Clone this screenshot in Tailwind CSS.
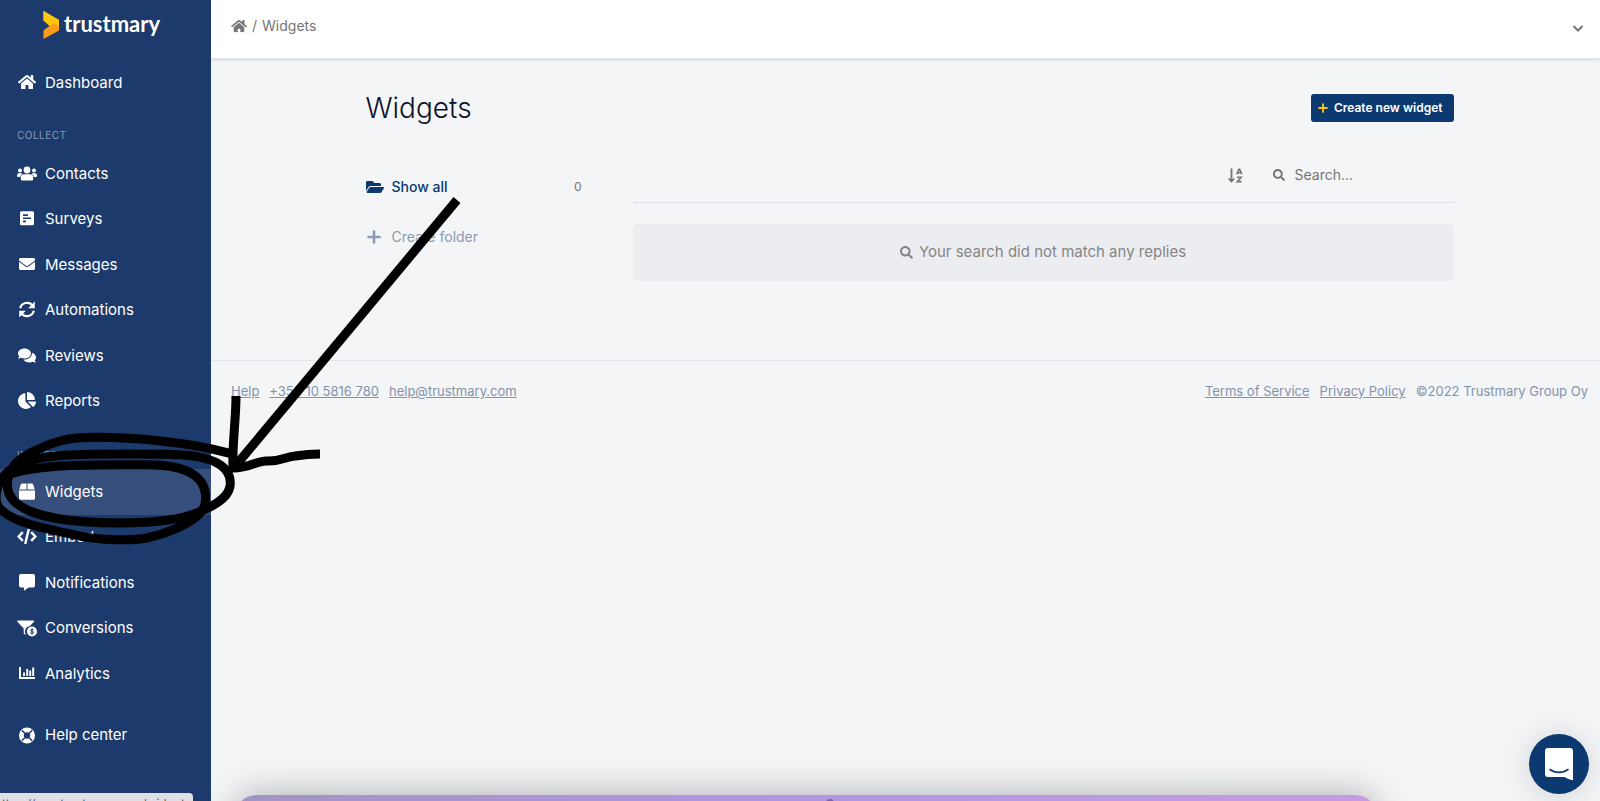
<!DOCTYPE html>
<html lang="en">
<head>
  <meta charset="UTF-8">
  <meta name="viewport" content="width=device-width, initial-scale=1.0">
  <title>Widgets - Trustmary</title>
  <script src="https://cdn.jsdelivr.net/npm/@tailwindcss/browser@4"></script>
</head>
<body class="relative flex min-h-screen overflow-hidden bg-[#f4f5f7] font-['Inter',sans-serif]">

  <!-- Shared icons -->
  <svg class="hidden">
    <symbol id="home" viewBox="0 0 576 512"><path d="M280.37 148.26L96 300.11V464a16 16 0 0 0 16 16l112.06-.29a16 16 0 0 0 15.92-16V368a16 16 0 0 1 16-16h64a16 16 0 0 1 16 16v95.64a16 16 0 0 0 16 16.05L464 480a16 16 0 0 0 16-16V300L295.67 148.26a12.19 12.19 0 0 0-15.3 0zM571.6 251.47L488 182.56V44.05a12 12 0 0 0-12-12h-56a12 12 0 0 0-12 12v72.61L318.47 43a48 48 0 0 0-61 0L4.34 251.47a12 12 0 0 0-1.6 16.9l25.5 31A12 12 0 0 0 45.15 301l235.22-193.74a12.19 12.19 0 0 1 15.3 0L530.9 301a12 12 0 0 0 16.9-1.6l25.5-31a12 12 0 0 0-1.7-16.93z"/></symbol>
    <symbol id="search" viewBox="0 0 512 512"><path d="M505 442.7L405.3 343c-4.5-4.5-10.6-7-17-7H372c27.6-35.3 44-79.7 44-128C416 93.1 322.9 0 208 0S0 93.1 0 208s93.1 208 208 208c48.3 0 92.7-16.4 128-44v16.3c0 6.4 2.5 12.5 7 17l99.7 99.7c9.4 9.4 24.6 9.4 33.9 0l28.3-28.3c9.4-9.4 9.4-24.6.1-34zM208 336c-70.7 0-128-57.2-128-128 0-70.7 57.2-128 128-128 70.7 0 128 57.2 128 128 0 70.7-57.2 128-128 128z"/></symbol>
    <symbol id="plus" viewBox="0 0 14 14"><path d="M7 1.5v11M1.5 7h11" fill="none" stroke="currentColor" stroke-width="2.6" stroke-linecap="round"/></symbol>
  </svg>

  <!-- Sidebar -->
  <aside class="flex w-[211px] shrink-0 flex-col bg-[#1c3a6b] text-[15px] text-white">
    <a href="#" class="flex h-[60px] items-start gap-[5px] pt-[11px] pl-[43px]">
      <svg class="h-7 w-4" viewBox="0 0 16 28">
        <path d="M.5 0 16 9v10.500L6 14.500.500 9.500z" fill="#ffc50d"/>
        <path d="M16 9v10.500L.500 28v-8.500L7 14.500z" fill="#f99d1c"/>
        <path d="M.5 0 16 9v7l-4-3.500-5 2-6.500-5z" fill="#ffc50d"/>
      </svg>
      <span class="font-['Lato',sans-serif] text-[22px] leading-[26px] font-bold">trustmary</span>
    </a>

    <nav>
      <a href="#" class="flex h-[46px] items-center gap-2 pl-[17px]">
        <svg class="h-[18px] w-5" viewBox="0 0 20 18" fill="currentColor"><use href="#home" x="1" y="0" width="18" height="16"/></svg>
        Dashboard
      </a>

      <h2 class="flex h-[45px] items-end pb-[9px] pl-[17px] text-[10px] leading-[14px] tracking-wider text-[#8b9bb8]">COLLECT</h2>
      <div class="grid h-[273px] auto-rows-fr">
        <a href="#" class="flex items-center gap-2 pl-[17px]">
          <svg class="h-[18px] w-5" viewBox="0 0 20 18" fill="currentColor">
            <circle cx="10" cy="5" r="3.400"/><circle cx="3" cy="5.500" r="2"/><circle cx="17" cy="5.500" r="2"/>
            <path d="M7.300 9.200h5.400a3.500 3.500 0 0 1 3.500 3.500v1.500a1.300 1.300 0 0 1-1.300 1.300H5.100a1.300 1.300 0 0 1-1.300-1.300v-1.500a3.500 3.500 0 0 1 3.500-3.500zM2 8.300h2c.6 0 1.100.2 1.500.6A4.500 4.500 0 0 0 3.200 12H1a1 1 0 0 1-1-1v-.7a2 2 0 0 1 2-2zM18 8.300h-2c-.6 0-1.100.2-1.500.6a4.500 4.500 0 0 1 2.300 3.100H19a1 1 0 0 0 1-1v-.7a2 2 0 0 0-2-2z"/>
          </svg>
          Contacts
        </a>
        <a href="#" class="flex items-center gap-2 pl-[17px]">
          <svg class="h-[18px] w-5" viewBox="0 0 20 18" fill="currentColor" fill-rule="evenodd"><path d="M4.500 1.200h11A1.500 1.500 0 0 1 17 2.700v11a1.500 1.500 0 0 1-1.500 1.500h-11A1.500 1.500 0 0 1 3 13.700v-11a1.500 1.500 0 0 1 1.500-1.500zM6 4.200v1.700h5V4.200zM6 7.400v1.700h8V7.400zM6 10.600v1.700h3v-1.700z"/></svg>
          Surveys
        </a>
        <a href="#" class="flex items-center gap-2 pl-[17px]">
          <svg class="h-[18px] w-5" viewBox="0 0 20 18" fill="currentColor"><svg x="2" width="16" height="16" viewBox="0 0 512 512"><path d="M502.300 190.800c3.900-3.100 9.700-.2 9.700 4.700V400c0 26.500-21.500 48-48 48H48c-26.500 0-48-21.500-48-48V195.600c0-5 5.700-7.800 9.700-4.700 22.400 17.400 52.100 39.500 154.100 113.600 21.100 15.400 56.700 47.800 92.200 47.600 35.700.3 72-32.800 92.300-47.600 102-74.100 131.600-96.300 154-113.700zM256 320c23.200.4 56.600-29.200 73.400-41.400 132.700-96.300 142.800-104.700 173.400-128.700 5.800-4.500 9.200-11.500 9.200-18.900v-19c0-26.500-21.500-48-48-48H48c-26.500 0-48 21.500-48 48v19c0 7.400 3.400 14.300 9.200 18.900 30.600 23.900 40.700 32.400 173.400 128.700 16.800 12.200 50.200 41.800 73.400 41.400z"/></svg></svg>
          Messages
        </a>
        <a href="#" class="flex items-center gap-2 pl-[17px]">
          <svg class="h-[18px] w-5" viewBox="0 0 20 18" fill="none" stroke="currentColor" stroke-width="2.200">
            <path d="M3.200 7.200A7 7 0 0 1 15.600 4.600M16.800 9.800A7 7 0 0 1 4.400 12.400"/>
            <path d="M17.800.5v6.700h-6.600zM2.200 16.500V9.800h6.600z" fill="currentColor" stroke="none"/>
          </svg>
          Automations
        </a>
        <a href="#" class="flex items-center gap-2 pl-[17px]">
          <svg class="h-[18px] w-5" viewBox="0 0 20 18" fill="currentColor"><svg x="1" width="18" height="17" viewBox="0 0 576 512"><path d="M416 192c0-88.400-93.100-160-208-160S0 103.600 0 192c0 34.300 14.100 65.900 38 92-13.400 30.200-35.500 54.200-35.800 54.500-2.200 2.300-2.800 5.700-1.500 8.700S4.800 352 8 352c36.600 0 66.900-12.300 88.700-25 32.200 15.700 70.300 25 111.300 25 114.900 0 208-71.600 208-160zm122 220c23.900-26 38-57.700 38-92 0-66.900-53.500-124.200-129.300-148.100.9 6.600 1.300 13.300 1.300 20.100 0 105.900-107.700 192-240 192-10.800 0-21.300-.8-31.700-1.900C207.800 439.600 281.800 480 368 480c41 0 79.100-9.200 111.300-25 21.800 12.700 52.100 25 88.700 25 3.200 0 6.100-1.900 7.300-4.800 1.300-2.900.7-6.300-1.500-8.700-.3-.3-22.400-24.200-35.800-54.500z"/></svg></svg>
          Reviews
        </a>
        <a href="#" class="flex items-center gap-2 pl-[17px]">
          <svg class="h-[18px] w-5" viewBox="0 0 20 18" fill="currentColor"><svg x="1" width="18" height="17" viewBox="0 0 544 512"><path d="M527.790 288H290.500l158.030 158.030c6.040 6.040 15.980 6.530 22.190.68 38.700-36.460 65.320-85.610 73.130-140.860 1.340-9.460-6.510-17.850-16.060-17.850zm-15.830-64.800C503.720 103.740 408.260 8.280 288.800.04 279.680-.59 272 7.100 272 16.240V240h223.770c9.140 0 16.820-7.680 16.190-16.800zM224 288V50.710c0-9.550-8.390-17.400-17.840-16.060C86.990 51.490-4.100 155.600.14 280.370 4.500 408.510 114.830 513.590 243.030 511.980c50.400-.63 96.970-16.870 135.260-44.030 7.900-5.600 8.420-17.230 1.570-24.080L224 288z"/></svg></svg>
          Reports
        </a>
      </div>

      <h2 class="flex h-[45px] items-end pb-[7px] pl-[17px] text-[10px] leading-[14px] tracking-wider text-[#8b9bb8]">IMPACT</h2>
      <div class="grid h-[228px] auto-rows-fr">
        <a href="#" class="flex items-center gap-2 bg-[#364e7b] pl-[17px]">
          <svg class="h-[18px] w-5" viewBox="0 0 20 18" fill="currentColor"><path d="M5.200.5h4.300v6H2.300l1.500-5A1.500 1.500 0 0 1 5.200.5zM10.500.5h4.300a1.500 1.500 0 0 1 1.400 1l1.500 5h-7.200zM2 7.500h16v7.800a1.500 1.500 0 0 1-1.500 1.500h-13A1.500 1.500 0 0 1 2 15.300z"/></svg>
          Widgets
        </a>
        <a href="#" class="flex items-center gap-2 pl-[17px]">
          <svg class="h-[18px] w-5" viewBox="0 0 20 18" fill="none" stroke="currentColor" stroke-width="2.400"><path d="M5.800 4.200 1.700 8.500l4.100 4.300M14.200 4.200l4.100 4.300-4.100 4.300M11.800 1 8.200 16"/></svg>
          Embed
        </a>
        <a href="#" class="flex items-center gap-2 pl-[17px]">
          <svg class="h-[18px] w-5" viewBox="0 0 20 18" fill="currentColor"><path d="M4 0h12a2 2 0 0 1 2 2v9.500a2 2 0 0 1-2 2h-4.500L7.500 16.500c-.3.200-.5 0-.5-.3v-2.700H4a2 2 0 0 1-2-2V2a2 2 0 0 1 2-2z"/></svg>
          Notifications
        </a>
        <a href="#" class="flex items-center gap-2 pl-[17px]">
          <svg class="h-[18px] w-5" viewBox="0 0 20 18">
            <path d="M1 .5h15.500c.7 0 1 .8.5 1.300L12.800 6a5.900 5.900 0 0 0-3.500 9.500l-2.600-2V8.500L.4 1.800C0 1.300.3.500 1 .5z" fill="currentColor"/>
            <circle cx="15" cy="11.500" r="5" fill="currentColor"/>
            <path d="M16.700 10c-.7-.8-3.100-.7-3.100.5 0 1.300 3 .7 3 2 0 1.200-2.500 1.200-3.300.4M15 8.300v6.400" fill="none" stroke="#1c3a6b"/>
          </svg>
          Conversions
        </a>
        <a href="#" class="flex items-center gap-2 pl-[17px]">
          <svg class="h-[18px] w-5" viewBox="0 0 20 18" fill="none" stroke="currentColor" stroke-width="2"><path d="M3 2v11h15M7 7.500V11M10.200 4v7M13.200 5.500V11M16.200 2.500V11" /></svg>
          Analytics
        </a>
      </div>

      <a href="#" class="mt-4 flex h-[45px] items-center gap-2 pl-[17px]">
        <svg class="h-[18px] w-5" viewBox="0 0 20 18" fill="none" stroke="currentColor">
          <circle cx="10" cy="8.500" r="5.600" stroke-width="4.800"/>
          <path d="m4.800 3.300 3 3M15.200 3.300l-3 3M4.800 13.700l3-3M15.200 13.700l-3-3" stroke="#1c3a6b" stroke-width="1.500"/>
        </svg>
        Help center
      </a>
    </nav>
  </aside>

  <!-- Page -->
  <div class="relative flex min-w-0 flex-1 flex-col overflow-hidden">
    <header class="flex h-[59px] items-center justify-between border-b border-[#e3e8ef] bg-white pr-4 pb-[6px] pl-5 text-sm text-[#757575] shadow-sm">
      <nav class="flex items-center gap-[5px]">
        <a href="#" aria-label="Home"><svg class="h-[14px] w-4" fill="currentColor"><use href="#home"/></svg></a>
        <span>/</span>
        <span>Widgets</span>
      </nav>
      <button aria-label="Account menu" class="pt-1">
        <svg class="h-3 w-3" viewBox="0 0 12 12" fill="none" stroke="currentColor" stroke-width="2"><path d="m1.500 4 4.500 4.500L10.500 4"/></svg>
      </button>
    </header>

    <main class="mx-auto w-full max-w-[1096px] pt-[35px] pb-[79px] pl-2">
      <div class="flex h-[28px] items-center justify-between">
        <h1 class="text-[28px] leading-[28px] font-light text-[#0b1228]">Widgets</h1>
        <button class="flex h-7 items-center gap-[6px] rounded-[3px] bg-[#0c3a70] pr-[11px] pl-[7px] text-xs font-semibold text-white">
          <svg class="h-[10px] w-[10px] text-[#ffc50d]"><use href="#plus"/></svg>
          Create new widget
        </button>
      </div>

      <div class="mt-[37px] flex gap-[51px]">
        <div class="w-[216px] text-sm">
          <a href="#" class="mt-[18px] flex h-[20px] items-center text-[#0c3a70]">
            <svg class="mr-2 h-4 w-[18px]" viewBox="0 0 576 512" fill="currentColor"><path d="M572.694 292.093L500.270 416.248A63.997 63.997 0 0 1 444.989 448H45.025c-18.523 0-30.064-20.093-20.731-36.093l72.424-124.155A64 64 0 0 1 152 256h399.964c18.523 0 30.064 20.093 20.730 36.093zM152 224h328v-48c0-26.510-21.490-48-48-48H272l-64-64H48C21.490 64 0 85.490 0 112v278.046l69.077-118.418C86.214 242.250 117.989 224 152 224z"/></svg>
            <span class="font-medium">Show all</span>
            <span class="ml-auto text-xs text-[#757575]">0</span>
          </a>
          <button class="mt-[30px] flex h-[20px] items-center text-[#8a9ab2]">
            <svg class="mr-[11px] ml-[1px] h-[14px] w-[14px]"><use href="#plus"/></svg>
            Create folder
          </button>
        </div>

        <div class="min-w-0 flex-1">
          <div class="flex h-[44px] items-start justify-end border-b border-[#d9e0ec] pt-[6px] text-sm text-[#757575]">
            <button aria-label="Sort by name" class="mr-[30px] flex h-5 items-center">
              <svg class="h-[15px] w-[15px]" viewBox="0 0 15 15" fill="none" stroke="currentColor" stroke-width="1.800"><path d="M3.500.5v12M.7 10.500l2.800 3 2.800-3"/><path d="m8.800 6.300 2-5h.9l2 5M9.500 4.800H13M9 9.200h4.200L9.200 13.600h4.500" stroke-width="1.600"/></svg>
            </button>
            <label for="search" class="mr-[10px] flex h-5 items-center" aria-label="Search"><svg class="h-3 w-3" fill="currentColor"><use href="#search"/></svg></label>
            <input id="search" type="text" placeholder="Search..." class="h-5 w-[159px] bg-transparent outline-none placeholder:text-[#757575]">
          </div>
          <div class="mt-[21px] flex h-[57px] items-center justify-center gap-[6px] rounded-[5px] bg-[#ecedf1] text-[15px] text-[#858585]">
            <svg class="h-[13px] w-[13px]" fill="currentColor"><use href="#search"/></svg>
            Your search did not match any replies
          </div>
        </div>
      </div>
    </main>

    <footer class="flex items-center justify-between border-t border-[#e0e6ee] pt-5 pr-3 pl-5 text-[13px] leading-[20px] text-[#8493ab]">
      <div class="flex gap-[10px]">
        <a href="#" class="underline">Help</a>
        <a href="#" class="underline">+358 10 5816 780</a>
        <a href="#" class="underline">help@trustmary.com</a>
      </div>
      <div class="flex gap-[10px]">
        <a href="#" class="underline">Terms of Service</a>
        <a href="#" class="underline">Privacy Policy</a>
        <span>©2022 Trustmary Group Oy</span>
      </div>
    </footer>

    <!-- Top edge of the window behind -->
    <div class="absolute right-[224px] -bottom-[54px] left-[25px] flex h-[60px] justify-center rounded-[20px] bg-linear-to-r from-[#a294c2] via-[#b097e3] to-[#c79be0] pt-1 pl-[48px] shadow-[0_0_36px_rgba(0,0,0,0.3)]">
      <span class="h-2 w-2 rounded-full bg-[#7c62ad]"></span>
    </div>

    <!-- Chat launcher -->
    <button aria-label="Open chat" class="absolute right-[11px] bottom-[7px] flex h-[60px] w-[60px] items-center justify-center rounded-full bg-[#0c3a70] shadow-[0_2px_32px_rgba(0,0,0,0.15)]">
      <svg class="h-8 w-7" viewBox="0 0 28 32"><path d="M3 0h22a3 3 0 0 1 3 3v29.500c-3-.8-6-2-8.500-3.500H3a3 3 0 0 1-3-3V3a3 3 0 0 1 3-3z" fill="#fff"/><path d="M5 21.500c5 3.800 13 3.800 18 0" fill="none" stroke="#0c3a70" stroke-width="1.600" stroke-linecap="round"/></svg>
    </button>
  </div>

  <!-- Link status bubble -->
  <div class="absolute -bottom-[10px] left-0 h-[18px] w-[193px] overflow-hidden rounded-tr-[4px] bg-[#dfe0e4] pt-[3px] text-xs leading-[15px] whitespace-nowrap text-[#55585e]">
    <span class="-ml-[5px]">https://app.trustmary.com/widget</span>
  </div>

  <!-- Marker drawing -->
  <svg class="pointer-events-none absolute top-0 left-0 h-[801px] w-[1600px]" viewBox="0 0 1600 801" fill="none" stroke="#000" stroke-width="9" stroke-linejoin="round">
    <path d="M457 200 237 464"/>
    <path d="M236 396C236 420 232 445 233 468C250 468 256 461 266 461C280 462 284 457 295 456Q308 454 320 454"/>
    <path transform="translate(0 370) scale(.33333)" stroke-width="27" d="M690 250C560 215 400 202 290 202C200 202 160 215 110 240C50 265 22 300 22 345C22 420 140 459 360 459C470 459 545 450 600 425C660 400 691 375 691 340C691 290 640 254 500 253C400 251 260 252 190 256C120 262 60 275 30 300C-10 330-30 400 10 425C60 465 160 480 230 496C300 512 400 512 440 504C500 492 560 465 590 440C612 420 620 400 616 370C610 320 560 284 440 284C300 284 130 280 30 312"/>
  </svg>

</body>
</html>
